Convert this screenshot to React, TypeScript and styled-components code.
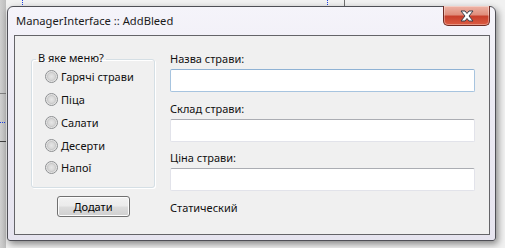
import React from "react";
import styled, { createGlobalStyle } from "styled-components";

const Global = createGlobalStyle`
  html, body { margin: 0; padding: 0; }
  body {
    width: 505px;
    height: 248px;
    overflow: hidden;
    background:
      linear-gradient(#808080, #808080) 0 93px / 6px 1px no-repeat,
      linear-gradient(#404040, #404040) 0 141px / 6px 1px no-repeat,
      repeating-linear-gradient(to right, #2040e0 0 1px, transparent 1px 2px) 0 122px / 6px 1px no-repeat,
      repeating-linear-gradient(to bottom, #2040e0 0 1px, transparent 1px 2px) 22px 0 / 1px 6px no-repeat,
      repeating-linear-gradient(to bottom, #2040e0 0 1px, transparent 1px 2px) 327px 0 / 1px 6px no-repeat,
      linear-gradient(#707070, #707070) 344px 0 / 1px 7px no-repeat,
      linear-gradient(to right, #cfcfcf 0, #bdbdbd 6px, transparent 6px),
      #f1f1f1;
    font-family: "Noto Sans", "Open Sans", sans-serif;
  }
`;

const Desktop = styled.div`
  padding: 6px 0 0 7px;
`;

const Window = styled.div`
  box-sizing: border-box;
  width: 489px;
  height: 235px;
  border: 1px solid #4f4f56;
  border-radius: 6px 6px 3px 3px;
  background: linear-gradient(to bottom, #f5f4fa 0%, #eceaf4 40%, #e6e4ef 100%);
  box-shadow: 2px 3px 7px rgba(0, 0, 0, 0.45);
  padding: 0 5px 5px 6px;
  display: flex;
  flex-direction: column;
`;

const TitleBar = styled.div`
  height: 28px;
  display: flex;
  align-items: flex-start;
  justify-content: space-between;
`;

const Title = styled.div`
  padding: 6px 0 0 2px;
  font-size: 11.2px;
  line-height: 15px;
  color: #1a1a1a;
`;

const CloseButton = styled.div`
  box-sizing: border-box;
  margin-top: -1px;
  width: 47px;
  height: 20px;
  border: 1px solid #6e2a22;
  border-top: none;
  border-radius: 0 0 5px 5px;
  background: linear-gradient(to bottom, #eeb4a6 0%, #e08e7c 45%, #c8402c 55%, #dc5c42 100%);
  box-shadow: inset 0 0 0 1px rgba(255, 255, 255, 0.35);
  display: flex;
  align-items: center;
  justify-content: center;
`;

const Client = styled.div`
  flex: 1;
  box-sizing: border-box;
  border: 1px solid #646468;
  background: #f0f0f0;
  display: flex;
  padding: 15px 0 0 16px;
  gap: 15px;
  font-size: 11px;
  color: #111;
`;

const LeftColumn = styled.div`
  width: 124px;
  display: flex;
  flex-direction: column;
  align-items: center;
`;

const Group = styled.fieldset`
  box-sizing: border-box;
  width: 124px;
  height: 138px;
  margin: -1px 0 0 0;
  padding: 0 0 0 13px;
  min-inline-size: 0;
  border: 1px solid #d5dfe5;
  border-radius: 3px;
  box-shadow: inset 1px 1px 0 #fff, 1px 1px 0 #fff;
`;

const Legend = styled.legend`
  margin-left: -9px;
  padding: 0 2px 3px;
  font-size: 11px;
  line-height: 15px;
`;

const RadioList = styled.div`
  display: flex;
  flex-direction: column;
  margin-top: -2.4px;
`;

const RadioRow = styled.label`
  height: 22.75px;
  display: flex;
  align-items: center;
  gap: 3px;
  line-height: 15px;
`;

const RadioDot = styled.span`
  box-sizing: border-box;
  width: 13px;
  height: 13px;
  border-radius: 50%;
  border: 1px solid #8c8e90;
  background: radial-gradient(circle at 50% 50%, #e6e6e6 0, #d8d8d8 3px, #c9c9c9 4px, #eeeeee 5.5px, #f8f8f8 6px);
  flex: none;
`;

const Button = styled.div`
  box-sizing: border-box;
  margin-top: 8px;
  width: 73px;
  height: 21px;
  border: 1px solid #707070;
  border-radius: 3px;
  background: linear-gradient(to bottom, #f2f2f2 0%, #ebebeb 48%, #dddddd 52%, #cfcfcf 100%);
  box-shadow: inset 0 0 0 1px #fcfcfc;
  display: flex;
  align-items: center;
  justify-content: center;
  font-size: 11px;
  color: #000;
`;

const RightColumn = styled.div`
  width: 305px;
  display: flex;
  flex-direction: column;
`;

const Field = styled.div`
  display: flex;
  flex-direction: column;
  margin-bottom: 8.5px;
`;

const Label = styled.div`
  height: 15px;
  line-height: 15px;
  margin-bottom: 3px;
`;

const Input = styled.div<{ $focused?: boolean }>`
  box-sizing: border-box;
  height: 23px;
  background: #fff;
  border: 1px solid ${(p) => (p.$focused ? "#a7c4df" : "#e2e3ea")};
  border-top-color: ${(p) => (p.$focused ? "#8fb2d4" : "#abadb3")};
  border-radius: 2px;
`;

const StaticText = styled.div`
  line-height: 15px;
`;

const CloseIcon = () => (
  <svg width="16" height="12" viewBox="0 0 16 12">
    <path
      d="M2 1 H6 L8 3.5 L10 1 H14 L10 6 L14 11 H10 L8 8.5 L6 11 H2 L6 6 Z"
      fill="#ffffff"
      stroke="#3b3f4a"
      strokeWidth="1"
      strokeLinejoin="round"
    />
  </svg>
);

const menus = ["Гарячі страви", "Піца", "Салати", "Десерти", "Напої"];

export default function App() {
  return (
    <>
      <Global />
      <Desktop>
        <Window>
          <TitleBar>
            <Title>ManagerInterface :: AddBleed</Title>
            <CloseButton>
              <CloseIcon />
            </CloseButton>
          </TitleBar>
          <Client>
            <LeftColumn>
              <Group>
                <Legend>В яке меню?</Legend>
                <RadioList>
                  {menus.map((m) => (
                    <RadioRow key={m}>
                      <RadioDot />
                      {m}
                    </RadioRow>
                  ))}
                </RadioList>
              </Group>
              <Button>Додати</Button>
            </LeftColumn>
            <RightColumn>
              <Field>
                <Label>Назва страви:</Label>
                <Input $focused />
              </Field>
              <Field>
                <Label>Склад страви:</Label>
                <Input />
              </Field>
              <Field>
                <Label>Ціна страви:</Label>
                <Input />
              </Field>
              <StaticText>Статический</StaticText>
            </RightColumn>
          </Client>
        </Window>
      </Desktop>
    </>
  );
}
